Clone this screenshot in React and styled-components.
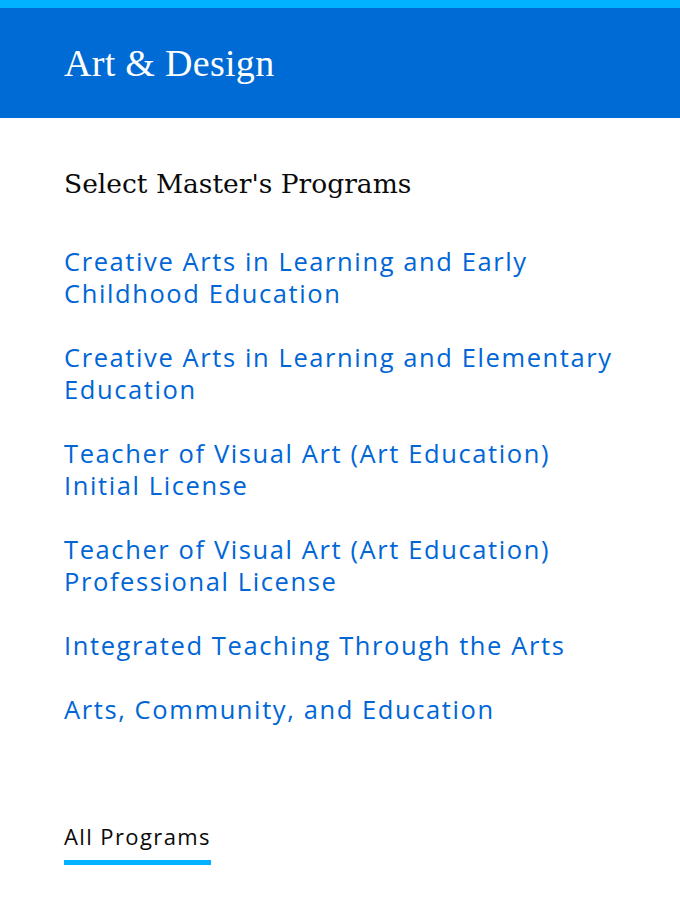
import React from "react";
import styled, { createGlobalStyle } from "styled-components";

const Global = createGlobalStyle`
  html, body { margin: 0; padding: 0; background: #fff; }
  * { box-sizing: border-box; }
`;

const Page = styled.div`
  width: 680px;
  min-height: 920px;
  background: #fff;
`;

const Header = styled.header`
  border-top: 8px solid #00b2ff;
  background: #006bd4;
  height: 118px;
  display: flex;
  align-items: center;
  padding: 0 64px;
`;

const Title = styled.h1`
  margin: 0;
  font-family: "Liberation Serif", serif;
  font-weight: 400;
  font-size: 38px;
  color: #fff;
  letter-spacing: 0.3px;
`;

const Main = styled.main`
  padding: 48px 64px 0;
`;

const Heading = styled.h2`
  margin: 0 0 43px;
  font-family: "DejaVu Serif", serif;
  font-weight: 400;
  font-size: 26.5px;
  line-height: 36px;
  color: #0a0a0a;
`;

const List = styled.ul`
  list-style: none;
  margin: 0;
  padding: 0;
  display: flex;
  flex-direction: column;
  gap: 32px;
`;

const Link = styled.a`
  display: block;
  font-family: "Open Sans", sans-serif;
  font-size: 25.5px;
  line-height: 32px;
  letter-spacing: 1.6px;
  color: #0066d6;
  text-decoration: none;
`;

const Footer = styled.div`
  margin-top: 97px;
`;

const AllLink = styled.a`
  display: inline-block;
  font-family: "Open Sans", sans-serif;
  font-size: 22px;
  line-height: 28px;
  letter-spacing: 1.4px;
  color: #0a0a0a;
  text-decoration: none;
  padding-bottom: 10px;
  border-bottom: 5px solid #00b2ff;
`;

const programs = [
  "Creative Arts in Learning and Early Childhood Education",
  "Creative Arts in Learning and Elementary Education",
  "Teacher of Visual Art (Art Education) Initial License",
  "Teacher of Visual Art (Art Education) Professional License",
  "Integrated Teaching Through the Arts",
  "Arts, Community, and Education",
];

export default function App() {
  return (
    <Page>
      <Global />
      <Header>
        <Title>Art &amp; Design</Title>
      </Header>
      <Main>
        <Heading>Select Master's Programs</Heading>
        <List>
          {programs.map((p) => (
            <li key={p}>
              <Link href="#">{p}</Link>
            </li>
          ))}
        </List>
        <Footer>
          <AllLink href="#">All Programs</AllLink>
        </Footer>
      </Main>
    </Page>
  );
}
